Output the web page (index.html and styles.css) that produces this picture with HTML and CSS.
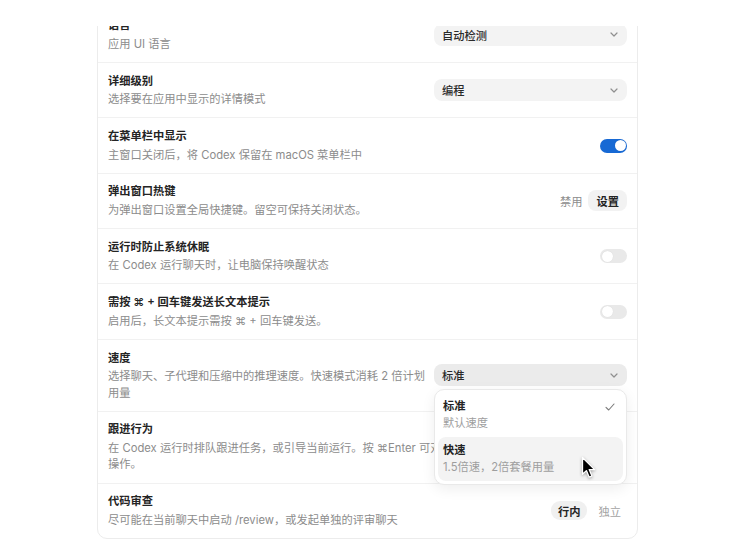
FILE: index.html
```html
<!DOCTYPE html>
<html lang="zh-CN">
<head>
<meta charset="utf-8">
<title>设置</title>
<link rel="stylesheet" href="styles.css">
</head>
<body>
<div class="viewport">
  <div class="card">
    <div class="row">
      <div class="info"><div class="title">语言</div><div class="desc">应用 UI 语言</div></div>
      <div class="select"><span>自动检测</span><svg class="chev" width="8" height="5" viewBox="0 0 8 5"><path d="M1 1l3 3 3-3"/></svg></div>
    </div>
    <div class="row">
      <div class="info"><div class="title">详细级别</div><div class="desc">选择要在应用中显示的详情模式</div></div>
      <div class="select"><span>编程</span><svg class="chev" width="8" height="5" viewBox="0 0 8 5"><path d="M1 1l3 3 3-3"/></svg></div>
    </div>
    <div class="row">
      <div class="info"><div class="title">在菜单栏中显示</div><div class="desc">主窗口关闭后，将 Codex 保留在 macOS 菜单栏中</div></div>
      <div class="toggle on"><span class="knob"></span></div>
    </div>
    <div class="row">
      <div class="info"><div class="title">弹出窗口热键</div><div class="desc">为弹出窗口设置全局快捷键。留空可保持关闭状态。</div></div>
      <div class="hotkey"><span class="muted">禁用</span><span class="btn">设置</span></div>
    </div>
    <div class="row">
      <div class="info"><div class="title">运行时防止系统休眠</div><div class="desc">在 Codex 运行聊天时，让电脑保持唤醒状态</div></div>
      <div class="toggle"><span class="knob"></span></div>
    </div>
    <div class="row">
      <div class="info"><div class="title">需按 ⌘ + 回车键发送长文本提示</div><div class="desc">启用后，长文本提示需按 ⌘ + 回车键发送。</div></div>
      <div class="toggle"><span class="knob"></span></div>
    </div>
    <div class="row">
      <div class="info"><div class="title">速度</div><div class="desc">选择聊天、子代理和压缩中的推理速度。快速模式消耗 2 倍计划用量</div></div>
      <div class="select-wrap">
        <div class="select active"><span>标准</span><svg class="chev" width="8" height="5" viewBox="0 0 8 5"><path d="M1 1l3 3 3-3"/></svg></div>
        <div class="menu">
          <div class="item">
            <div class="item-text"><div class="item-title">标准</div><div class="item-desc">默认速度</div></div>
            <svg class="check" width="10" height="8" viewBox="0 0 10 8"><path d="M1 4.3l2.7 2.7L9 1"/></svg>
          </div>
          <div class="item hover">
            <div class="item-text"><div class="item-title">快速</div><div class="item-desc">1.5倍速，2倍套餐用量</div></div>
          </div>
          <svg class="cursor" width="16" height="24" viewBox="0 0 16 24"><path d="M1.5 1.5L1.5 18.3L5.4 14.6L8.2 21.2L10.9 20L8.2 13.6L13.6 13.6Z"/></svg>
        </div>
      </div>
    </div>
    <div class="row">
      <div class="info"><div class="title">跟进行为</div><div class="desc">在 Codex 运行时排队跟进任务，或引导当前运行。按 ⌘Enter 可对调默认<br>操作。</div></div>
      <div class="seg"><span class="seg-item sel">排队</span><span class="seg-item">引导</span></div>
    </div>
    <div class="row">
      <div class="info"><div class="title">代码审查</div><div class="desc">尽可能在当前聊天中启动 /review，或发起单独的评审聊天</div></div>
      <div class="seg"><span class="seg-item sel">行内</span><span class="seg-item">独立</span></div>
    </div>
  </div>
</div>
</body>
</html>
```

FILE: styles.css
```css
html, body {
  margin: 0;
  padding: 0;
  background: #ffffff;
}

body {
  font-family: "Inter", "Noto Sans CJK SC", "DejaVu Sans", sans-serif;
  font-size: 11.25px;
  color: #222222;
  -webkit-font-smoothing: antialiased;
}

.viewport {
  margin-top: 26px;
  height: 527px;
  overflow: hidden;
}

.card {
  width: 541px;
  box-sizing: border-box;
  margin: -19.4px auto 0;
  border: 1px solid #ececec;
  border-radius: 10px;
  background: #ffffff;
}

.row {
  display: flex;
  align-items: center;
  gap: 6px;
  padding: 9.7px 10px;
}

.row + .row {
  border-top: 1px solid #f1f1f1;
}

.info {
  flex: 1;
  min-width: 0;
}

.title {
  font-weight: 600;
  line-height: 17px;
  color: #242424;
  margin-bottom: 1.5px;
}

.desc {
  line-height: 16.5px;
  color: #8c8c8c;
}

.select-wrap {
  position: relative;
  flex-shrink: 0;
}

.select {
  flex-shrink: 0;
  width: 193px;
  height: 22px;
  box-sizing: border-box;
  border-radius: 8px;
  background: #f3f3f3;
  display: flex;
  align-items: center;
  justify-content: space-between;
  padding: 0 9px 0 8px;
  font-weight: 500;
  color: #2a2a2a;
}

.select.active {
  background: #ebebeb;
}

.chev path {
  fill: none;
  stroke: #8f8f8f;
  stroke-width: 1.2;
  stroke-linecap: round;
  stroke-linejoin: round;
}

.toggle {
  flex-shrink: 0;
  width: 27px;
  height: 14px;
  box-sizing: border-box;
  border-radius: 7px;
  background: #e9e9e9;
  padding: 1.5px;
  display: flex;
  justify-content: flex-start;
}

.toggle.on {
  background: #1769d4;
  justify-content: flex-end;
}

.knob {
  width: 11px;
  height: 11px;
  border-radius: 50%;
  background: #ffffff;
  box-shadow: 0 0 1px rgba(0, 0, 0, 0.12);
}

.hotkey {
  flex-shrink: 0;
  display: flex;
  align-items: center;
  gap: 6px;
}

.muted {
  color: #8c8c8c;
}

.btn {
  height: 21px;
  display: flex;
  align-items: center;
  padding: 0 8px;
  border-radius: 8px;
  background: #f2f2f2;
  font-weight: 600;
  color: #242424;
}

.seg {
  flex-shrink: 0;
  display: flex;
  align-items: center;
  gap: 5px;
}

.seg-item {
  height: 19px;
  display: flex;
  align-items: center;
  padding: 0 6px;
  border-radius: 9px;
  color: #a3a3a3;
}

.seg-item.sel {
  padding: 0 7px;
  background: #f0f0f0;
  color: #242424;
  font-weight: 600;
}

.menu {
  position: absolute;
  top: calc(100% + 3px);
  left: 0;
  width: 193px;
  box-sizing: border-box;
  padding: 3px;
  border: 1px solid #e9e9e9;
  border-radius: 10px;
  background: #ffffff;
  box-shadow: 0 4px 14px rgba(0, 0, 0, 0.07);
  z-index: 2;
}

.item {
  display: flex;
  align-items: flex-start;
  justify-content: space-between;
  padding: 5px 8px 5px 5px;
  border-radius: 8px;
}

.item.hover {
  background: #f3f3f3;
}

.item-title {
  font-weight: 600;
  line-height: 17px;
  color: #242424;
}

.item-desc {
  line-height: 17px;
  color: #9e9e9e;
}

.check {
  margin-top: 5px;
}

.check path {
  fill: none;
  stroke: #7a7a7a;
  stroke-width: 1.1;
  stroke-linecap: round;
  stroke-linejoin: round;
}

.cursor {
  position: absolute;
  left: 146px;
  top: 66px;
  filter: drop-shadow(0 1px 1.5px rgba(0, 0, 0, 0.35));
}

.cursor path {
  fill: #000000;
  stroke: #ffffff;
  stroke-width: 1.3;
  stroke-linejoin: round;
}
```
